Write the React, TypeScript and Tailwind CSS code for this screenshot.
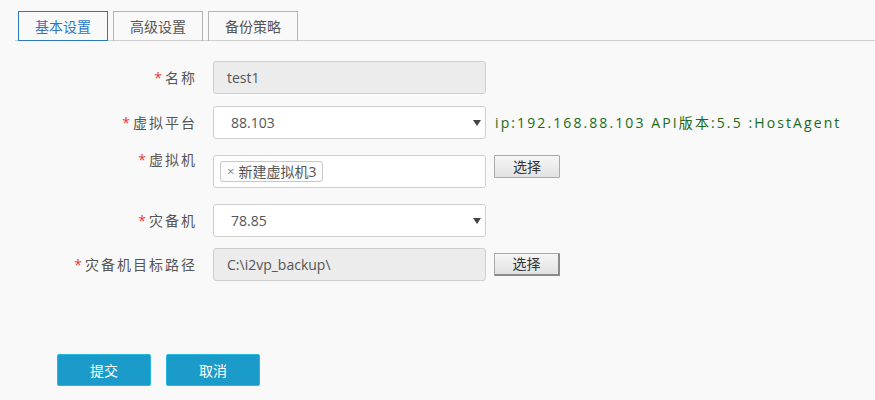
// 灾备任务 编辑 — 基本设置 탭
import type { ReactNode } from 'react'

const FONT = "font-['Open_Sans','Noto_Sans_CJK_SC',sans-serif]"

function Label({ children, className = '' }: { children: ReactNode; className?: string }) {
  return (
    <div className={`w-[197px] shrink-0 text-right text-[14px] leading-5 tracking-[2px] text-[#555] ${className}`}>
      <span className="mr-[1px] text-[#e4393c]">*</span>
      {children}
    </div>
  )
}

function Caret() {
  return (
    <svg width="8" height="6" viewBox="0 0 8 6" className="absolute right-[4px] top-[13px]">
      <path d="M0 0 L8 0 L4 6 Z" fill="#444" />
    </svg>
  )
}

function PickButton({ heavy = false }: { heavy?: boolean }) {
  return (
    <button
      className={`ml-[8px] h-[23px] w-[66px] rounded-[1px] border border-[#a9a9a9] bg-gradient-to-b from-[#f6f6f6] to-[#e2e2e2] text-[14px] leading-none text-[#333] ${
        heavy ? 'border-r-2 border-b-2 border-r-[#8a8a8a] border-b-[#8a8a8a]' : ''
      }`}
    >
      选择
    </button>
  )
}

export default function App() {
  return (
    <div className={`h-[400px] w-[875px] overflow-hidden bg-[#f9f9f9] ${FONT}`}>
      {/* 탭 */}
      <div className="ml-[15px] flex h-[41px] items-end gap-[5px] border-b border-[#cfcfcf] pl-[3px] pt-[11px]">
        <div className="-mb-px flex h-[30px] w-[90px] items-center justify-center border border-[#2b78c1] bg-[#f9f9f9] text-[14px] text-[#2b78c1]">
          基本设置
        </div>
        <div className="-mb-px flex h-[30px] w-[90px] items-center justify-center border border-b-0 border-[#b5b5b5] text-[14px] text-[#555]">
          高级设置
        </div>
        <div className="-mb-px flex h-[30px] w-[90px] items-center justify-center border border-b-0 border-[#b5b5b5] text-[14px] text-[#555]">
          备份策略
        </div>
      </div>

      <div className="pt-[20px]">
        {/* 名称 */}
        <div className="flex items-center">
          <Label>名称</Label>
          <div className="ml-[16px] flex h-[33px] w-[273px] items-center rounded-[3px] border border-[#cfcfcf] bg-[#ececec] pl-[13px] text-[14px] text-[#555]">
            test1
          </div>
        </div>

        {/* 虚拟平台 */}
        <div className="mt-[12px] flex items-center">
          <Label>虚拟平台</Label>
          <div className="relative ml-[16px] flex h-[33px] w-[273px] items-center rounded-[3px] border border-[#cfcfcf] bg-white pl-[17px] text-[14px] text-[#555]">
            88.103
            <Caret />
          </div>
          <span className="ml-[9px] whitespace-nowrap text-[14px] tracking-[2.1px] text-[#1a6a1a]">
            ip:192.168.88.103 API版本:5.5 :HostAgent
          </span>
        </div>

        {/* 虚拟机 */}
        <div className="mt-[16px] flex items-start">
          <Label className="-mt-[5px]">虚拟机</Label>
          <div className="ml-[16px] flex h-[33px] w-[273px] items-center rounded-[3px] border border-[#cfcfcf] bg-white pl-[6px]">
            <span className="flex h-[21px] items-center rounded-[3px] border border-[#c8c8c8] bg-[#fbfbfb] px-[6px] text-[14px] text-[#555]">
              <span className="mr-[4px] text-[13px] text-[#888]">×</span>
              新建虚拟机3
            </span>
          </div>
          <PickButton />
        </div>

        {/* 灾备机 */}
        <div className="mt-[16px] flex items-center">
          <Label>灾备机</Label>
          <div className="relative ml-[16px] flex h-[33px] w-[273px] items-center rounded-[3px] border border-[#cfcfcf] bg-white pl-[17px] text-[14px] text-[#555]">
            78.85
            <Caret />
          </div>
        </div>

        {/* 灾备机目标路径 */}
        <div className="mt-[11px] flex items-center">
          <Label>灾备机目标路径</Label>
          <div className="ml-[16px] flex h-[33px] w-[273px] items-center rounded-[3px] border border-[#cfcfcf] bg-[#ececec] pl-[13px] text-[14px] text-[#555]">
            C:\i2vp_backup\
          </div>
          <PickButton heavy />
        </div>

        {/* 하단 버튼 */}
        <div className="mt-[73px] flex gap-[15px] pl-[57px]">
          <button className="h-[32px] w-[94px] rounded-[2px] border border-[#25b8e0] bg-[#1b9bc9] text-[14px] text-white">
            提交
          </button>
          <button className="h-[32px] w-[94px] rounded-[2px] border border-[#25b8e0] bg-[#1b9bc9] text-[14px] text-white">
            取消
          </button>
        </div>
      </div>
    </div>
  )
}
